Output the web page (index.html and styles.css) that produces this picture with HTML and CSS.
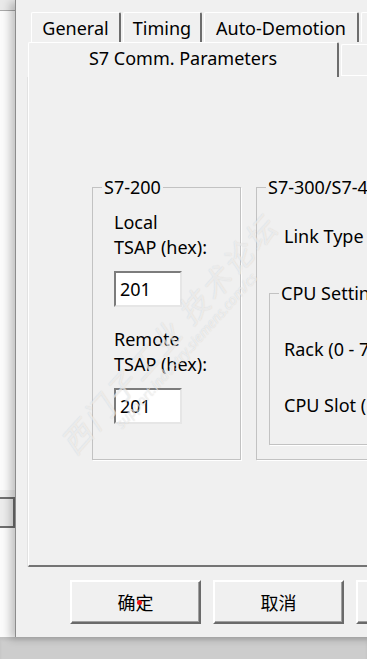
FILE: index.html
```html
<!DOCTYPE html>
<html lang="en">
<head>
  <meta charset="UTF-8" />
  <meta name="viewport" content="width=device-width, initial-scale=1.0"/>
  <title>S7 Comm. Parameters</title>
  <link rel="stylesheet" href="styles.css">
</head>
<body>
  <div class="screen">
    <div class="desk">
      <aside class="side">
        <div class="side-top"></div>
        <div class="side-btn"></div>
      </aside>

      <div class="dialog">
        <div class="tab-row back">
          <span class="tab w-general">General</span>
          <span class="tab w-timing">Timing</span>
          <span class="tab w-auto">Auto-Demotion</span>
          <span class="tab w-more"></span>
        </div>
        <div class="tab-row front">
          <span class="tab active">S7 Comm. Parameters</span>
          <span class="tab w-next"></span>
        </div>

        <div class="page">
          <div class="groups">
            <fieldset class="group s7-200">
              <legend>S7-200</legend>
              <div class="group-body">
                <div class="label">Local<br>TSAP (hex):</div>
                <input class="field" type="text" value="201">
                <div class="label remote">Remote<br>TSAP (hex):</div>
                <input class="field" type="text" value="201">
              </div>
            </fieldset>

            <fieldset class="group s7-300">
              <legend>S7-300/S7-400</legend>
              <div class="group-body wide">
                <div class="label link">Link Type</div>
                <fieldset class="group cpu">
                  <legend>CPU Settings</legend>
                  <div class="group-body cpu-body">
                    <div class="label">Rack (0 - 7)</div>
                    <div class="label slot">CPU Slot (1 - 31)</div>
                  </div>
                </fieldset>
              </div>
            </fieldset>
          </div>

          <div class="watermark">
            <span class="wm-cn">西门子工业 技术论坛</span>
            <span class="wm-url">support.industry.siemens.com/cs</span>
          </div>
        </div>

        <div class="buttons">
          <button class="btn ok">确定<i class="dot"></i></button>
          <button class="btn">取消</button>
          <button class="btn">应用</button>
        </div>
      </div>
    </div>
    <div class="taskbar"></div>
  </div>
</body>
</html>
```

FILE: styles.css
```css
body {
  margin: 0;
  background-color: #ffffff;
  font-family: "Noto Sans", "Open Sans", sans-serif;
  font-size: 18px;
  color: #000;
  overflow: hidden;
}

.screen {
  width: 367px;
  height: 670px;
  overflow: hidden;
}

.desk {
  display: flex;
  height: 637px;
}

/* window behind the dialog */
.side {
  width: 15px;
  flex-shrink: 0;
  background-color: #fbfbfb;
  display: flex;
  flex-direction: column;
}

.side-top {
  height: 10px;
  background-color: #e9e9e9;
  border-bottom: 1px solid #a9a9a9;
}

.side-btn {
  margin-top: 486px;
  height: 27px;
  background-color: #ececec;
  border: 2px solid #6f6f6f;
  border-left: none;
  box-shadow: 0 -7px 0 #efefef;
}

/* dialog */
.dialog {
  width: 520px;
  flex-shrink: 0;
  background-color: #f0f0f0;
  border-left: 1px solid #8c8c8c;
  box-shadow: -5px 2px 8px rgba(0, 0, 0, 0.22);
  padding: 12px 0 0 12px;
  display: flex;
  flex-direction: column;
}

.tab-row {
  display: flex;
  white-space: nowrap;
}

.tab-row.back {
  height: 30px;
  padding-left: 3px;
  gap: 2px;
}

.tab-row.front {
  height: 35px;
}

.tab {
  box-sizing: border-box;
  display: flex;
  align-items: center;
  justify-content: center;
  border-top: 1px solid #ffffff;
  border-left: 1px solid #ffffff;
  border-right: 2px solid #6d6d6d;
  border-radius: 2px 2px 0 0;
  background-color: #f0f0f0;
}

.w-general { width: 90px; }
.w-timing { width: 79px; }
.w-auto { width: 155px; }
.w-more { width: 60px; }

.tab.active {
  width: 311px;
  padding-bottom: 4px;
}

.tab.w-next {
  width: 80px;
  margin: 2px 0 1px 2px;
  border-bottom: 1px solid #ffffff;
}

.page {
  position: relative;
  height: 490px;
  box-sizing: border-box;
  border-left: 1px solid #ffffff;
  border-bottom: 2px solid #747474;
  box-shadow: -1px 0 0 #e2e2e2;
  padding: 99px 0 0 63px;
}

.groups {
  display: flex;
  gap: 15px;
}

.group {
  margin: 0;
  padding: 0;
  min-width: 0;
  box-sizing: border-box;
  border: 1px solid #c2c2c2;
  box-shadow: 1px 1px 0 #ffffff;
}

.group legend {
  margin-left: 9px;
  padding: 0 2px;
  line-height: 22px;
}

.s7-200 {
  width: 149px;
  height: 284px;
}

.s7-300 {
  width: 260px;
  height: 284px;
}

.group-body {
  padding: 12px 0 0 21px;
}

.label {
  line-height: 25px;
  white-space: nowrap;
}

.label.remote {
  margin-top: 20px;
}

.field {
  display: block;
  box-sizing: border-box;
  width: 68px;
  height: 36px;
  margin-top: 11px;
  padding: 0 0 0 4px;
  font: inherit;
  color: #000;
  background-color: #ffffff;
  border: 2px solid;
  border-color: #7c7c7c #e6e6e6 #e6e6e6 #7c7c7c;
  outline: none;
}

.group-body.wide {
  padding: 26px 0 0 12px;
}

.label.link {
  margin-left: 15px;
}

.cpu {
  margin-top: 33px;
  width: 300px;
  height: 163px;
}

.group-body.cpu-body {
  padding: 33px 0 0 14px;
}

.label.slot {
  margin-top: 31px;
}

/* faint forum watermark laid over the page */
.watermark {
  position: absolute;
  left: -25px;
  top: 238px;
  width: 340px;
  transform: rotate(-48deg);
  transform-origin: center;
  pointer-events: none;
  white-space: nowrap;
  color: rgba(255, 255, 255, 0.6);
  text-shadow: 0 0 1px rgba(120, 120, 120, 0.3);
  display: flex;
  flex-direction: column;
  align-items: center;
  line-height: 1.1;
}

.wm-cn {
  font-family: "Noto Sans CJK SC", sans-serif;
  font-size: 30px;
  font-style: italic;
  letter-spacing: 3px;
}

.wm-url {
  font-size: 14px;
  font-style: italic;
}

.buttons {
  display: flex;
  gap: 12px;
  padding: 13px 0 0 42px;
}

.btn {
  position: relative;
  width: 131px;
  height: 44px;
  box-sizing: border-box;
  font-family: "Noto Sans CJK SC", sans-serif;
  font-size: 18px;
  color: #000;
  background-color: #f0f0f0;
  border: 2px solid;
  border-color: #ffffff #6a6a6a #6a6a6a #ffffff;
  box-shadow: inset -1px -1px 0 #a0a0a0;
  padding: 0;
}

.dot {
  position: absolute;
  left: 65px;
  top: 18px;
  width: 5px;
  height: 5px;
  border-radius: 50%;
  background-color: #ee1111;
}

.taskbar {
  height: 22px;
  background-color: #cdcdcd;
  border-bottom: 3px solid #ffffff;
  box-shadow: inset 0 3px 3px rgba(0, 0, 0, 0.06);
}
```
